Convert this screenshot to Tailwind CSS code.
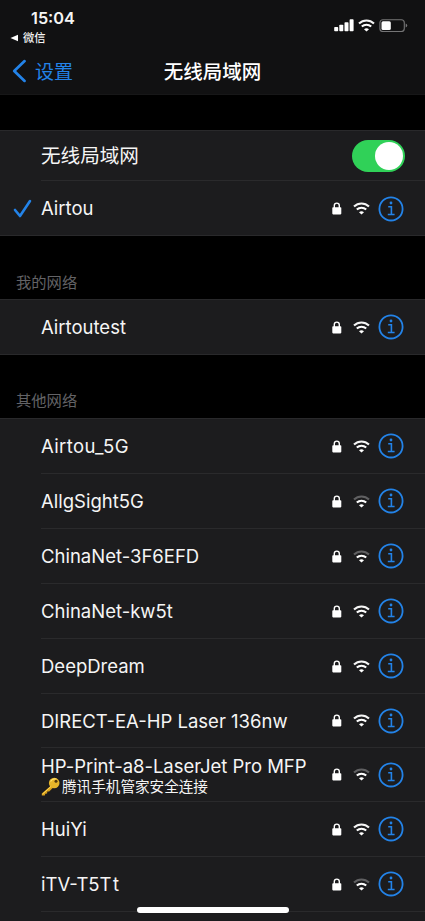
<!DOCTYPE html>
<html lang="zh-CN">
<head>
<meta charset="utf-8">
<meta name="viewport" content="width=device-width, initial-scale=1">
<title>无线局域网</title>
<script src="https://cdn.jsdelivr.net/npm/@tailwindcss/browser@4"></script>
</head>
<body class="bg-black">
<svg class="hidden">
  <symbol id="lock" viewBox="0 0 10 13"><path d="M2.3 6V3.6a2.5 2.5 0 0 1 5 0V6" fill="none" stroke="#fff" stroke-width="1.4"/><rect x=".3" y="5.2" width="9" height="7.2" rx=".8" fill="#fff"/></symbol>
  <symbol id="arc-outer" viewBox="0 0 17 13"><path d="M1 4.5C5.2 .4 11.8 .4 16 4.5" fill="none" stroke="currentColor" stroke-width="2.1"/></symbol>
  <symbol id="arc-inner" viewBox="0 0 17 13"><path d="M3.8 7.6C6.5 5.1 10.5 5.1 13.2 7.6" fill="none" stroke="#fff" stroke-width="2.1"/><path d="M8.5 12.6 6 10.2Q8.5 8.2 11 10.2Z" fill="#fff"/></symbol>
  <symbol id="wifi" viewBox="0 0 17 13"><use href="#arc-outer" width="17" height="13"/><use href="#arc-inner" width="17" height="13"/></symbol>
  <symbol id="info" viewBox="0 0 26 26"><g fill="none" stroke="#2383e8" stroke-width="1.8"><circle cx="13" cy="12.9" r="11.6"/><path d="M10.2 10.7h3.2v7.6M9.8 18.5h6.8" stroke-width="1.6"/></g><circle cx="13" cy="7" r="1.4" fill="#2383e8"/></symbol>
</svg>
<div class="w-[425px] h-[921px] relative overflow-hidden bg-black text-[#f5f5f5] font-['Inter','Noto_Sans_CJK_SC',sans-serif]">
  <header class="h-[95px] bg-[#111112] border-b border-[#171718]">
    <div class="flex justify-between h-[46px]">
      <div class="pl-[10px] pt-[9px]">
        <div class="pl-[21px] text-[16.3px] leading-[19px] font-semibold">15:04</div>
        <div class="flex items-center mt-[2px] gap-[5px] h-[16px] text-[11.3px] leading-[16px] font-medium"><svg class="w-[8px] h-[8px]" viewBox="0 0 8 8"><path d="M.5 4 8 .7v6.6z" fill="#fff"/></svg>微信</div>
      </div>
      <div class="flex items-start pt-[19px] pr-[17px]">
        <svg class="w-[20px] h-[13px]" viewBox="0 0 20 13" fill="#fff"><rect x=".2" y="8" width="4" height="4.3" rx=".8"/><rect x="5.3" y="5.8" width="4" height="6.5" rx=".8"/><rect x="10.5" y="3.3" width="4" height="9" rx=".8"/><rect x="15.6" y=".3" width="4" height="12" rx=".8"/></svg>
        <svg class="w-[17px] h-[13px] ml-[4px]"><use href="#wifi"/></svg>
        <svg class="w-[29px] h-[13px] ml-[4px]" viewBox="0 0 29 13"><rect x=".9" y=".7" width="24.4" height="11.8" rx="3" fill="none" stroke="#757576" stroke-width="1.1"/><rect x="2.5" y="2.2" width="9.3" height="8.8" rx="1.5" fill="#fff"/><path d="M26.7 4.6q1.5.5 1.5 2t-1.5 2z" fill="#757576"/></svg>
      </div>
    </div>
    <div class="grid grid-cols-[1fr_auto_1fr] items-center h-[50px]">
      <div class="flex items-center pl-[12px] gap-[8px] text-[#2383e8] text-[19px] leading-[28px]"><svg class="w-[15px] h-[24px]" viewBox="0 0 15 24"><path d="M12.6 2.1 2.2 12l10.4 9.9" fill="none" stroke="currentColor" stroke-width="2.7" stroke-linecap="round" stroke-linejoin="round"/></svg><span class="pt-[3px]">设置</span></div>
      <h1 class="pt-[2px] text-[19.5px] leading-[28px] font-medium text-white">无线局域网</h1>
      <div></div>
    </div>
  </header>

  <section class="mt-[35px] bg-[#1c1c1e] border-y border-[#29292b] h-[106px] text-[18.5px]">
    <div class="flex items-center justify-between h-[50px] ml-[41px] pr-[20px] border-b border-[#2a2a2c] text-[19.6px]"><span class="pt-[3px]">无线局域网</span>
      <div class="w-[53px] h-[32px] rounded-full bg-[#30d158] flex items-center justify-end pr-[2px]"><div class="w-[28px] h-[28px] rounded-full bg-white"></div></div>
    </div>
    <div class="flex items-center h-[55px] pl-[13px] pr-[21px]"><svg class="w-[19px] h-[20px] mr-[9px]" viewBox="0 0 19 20"><path d="m2 11 5 6L17 2" fill="none" stroke="#2383e8" stroke-width="2.6" stroke-linecap="round" stroke-linejoin="round"/></svg><span class="grow pt-[1px]">Airtou</span><svg class="w-[10px] h-[13px]"><use href="#lock"/></svg><svg class="w-[17px] h-[13px] ml-[11px] mr-[8px]"><use href="#wifi"/></svg><svg class="w-[26px] h-[26px]"><use href="#info"/></svg></div>
  </section>

  <h2 class="h-[63px] pt-[35px] pl-[16px] text-[15.3px] leading-[24px] text-[#636366]">我的网络</h2>
  <section class="h-[56px] bg-[#1c1c1e] border-y border-[#29292b] text-[18.5px]">
    <div class="flex items-center h-[54px] pl-[41px] pr-[21px]"><span class="grow pt-[2px]">Airtoutest</span><svg class="w-[10px] h-[13px]"><use href="#lock"/></svg><svg class="w-[17px] h-[13px] ml-[11px] mr-[8px]"><use href="#wifi"/></svg><svg class="w-[26px] h-[26px]"><use href="#info"/></svg></div>
  </section>

  <h2 class="h-[63px] pt-[34px] pl-[16px] text-[15.3px] leading-[24px] text-[#636366]">其他网络</h2>
  <section class="h-[504px] bg-[#1c1c1e] border-t border-[#29292b] pl-[41px] text-[18.5px]">
    <div class="flex items-center h-[55px] pr-[21px] border-b border-[#2a2a2c]"><span class="grow pt-[2px] tracking-[.37px]">Airtou_5G</span><svg class="w-[10px] h-[13px]"><use href="#lock"/></svg><svg class="w-[17px] h-[13px] ml-[11px] mr-[8px]"><use href="#wifi"/></svg><svg class="w-[26px] h-[26px]"><use href="#info"/></svg></div>
    <div class="flex items-center h-[55px] pr-[21px] border-b border-[#2a2a2c]"><span class="grow pt-[2px]">AllgSight5G</span><svg class="w-[10px] h-[13px]"><use href="#lock"/></svg><svg class="w-[17px] h-[13px] ml-[11px] mr-[8px] text-[#606062]"><use href="#wifi"/></svg><svg class="w-[26px] h-[26px]"><use href="#info"/></svg></div>
    <div class="flex items-center h-[55px] pr-[21px] border-b border-[#2a2a2c]"><span class="grow pt-[2px]">ChinaNet-3F6EFD</span><svg class="w-[10px] h-[13px]"><use href="#lock"/></svg><svg class="w-[17px] h-[13px] ml-[11px] mr-[8px] text-[#606062]"><use href="#wifi"/></svg><svg class="w-[26px] h-[26px]"><use href="#info"/></svg></div>
    <div class="flex items-center h-[55px] pr-[21px] border-b border-[#2a2a2c]"><span class="grow pt-[2px]">ChinaNet-kw5t</span><svg class="w-[10px] h-[13px]"><use href="#lock"/></svg><svg class="w-[17px] h-[13px] ml-[11px] mr-[8px]"><use href="#wifi"/></svg><svg class="w-[26px] h-[26px]"><use href="#info"/></svg></div>
    <div class="flex items-center h-[55px] pr-[21px] border-b border-[#2a2a2c]"><span class="grow pt-[2px]">DeepDream</span><svg class="w-[10px] h-[13px]"><use href="#lock"/></svg><svg class="w-[17px] h-[13px] ml-[11px] mr-[8px]"><use href="#wifi"/></svg><svg class="w-[26px] h-[26px]"><use href="#info"/></svg></div>
    <div class="flex items-center h-[54px] pr-[21px] border-b border-[#2a2a2c]"><span class="grow pt-[2px]">DIRECT-EA-HP Laser 136nw</span><svg class="w-[10px] h-[13px]"><use href="#lock"/></svg><svg class="w-[17px] h-[13px] ml-[11px] mr-[8px]"><use href="#wifi"/></svg><svg class="w-[26px] h-[26px]"><use href="#info"/></svg></div>
    <div class="flex items-center h-[54px] pr-[21px] border-b border-[#2a2a2c]">
      <div class="grow pt-[2px]"><div class="leading-[22px] tracking-[-.03px]">HP-Print-a8-LaserJet Pro MFP</div>
        <div class="flex items-center text-[14.6px] leading-[20px] whitespace-nowrap"><svg class="w-[20px] h-[19px] mr-px shrink-0" viewBox="0 0 20 19"><path d="m10 8.5-9.2 8v2h3l.5-1.8 1.8-.2.2-1.9 1.9-.2 4-4z" fill="#d9a01c"/><circle cx="13.2" cy="6" r="5.3" fill="#e6b52a"/><path d="M9.5 4.5q2-3.5 6-2.5" fill="none" stroke="#ffe26a" stroke-width="1.2"/><path d="m10 9.5-8.5 7.6" stroke="#ffda57" stroke-width="1"/><circle cx="15" cy="4.3" r="1.5" fill="#51370b"/></svg>腾讯手机管家安全连接</div></div>
      <svg class="w-[10px] h-[13px]"><use href="#lock"/></svg><svg class="w-[17px] h-[13px] ml-[11px] mr-[8px] text-[#606062]"><use href="#wifi"/></svg><svg class="w-[26px] h-[26px]"><use href="#info"/></svg></div>
    <div class="flex items-center h-[55px] pr-[21px] border-b border-[#2a2a2c]"><span class="grow pt-[2px]">HuiYi</span><svg class="w-[10px] h-[13px]"><use href="#lock"/></svg><svg class="w-[17px] h-[13px] ml-[11px] mr-[8px]"><use href="#wifi"/></svg><svg class="w-[26px] h-[26px]"><use href="#info"/></svg></div>
    <div class="flex items-center h-[55px] pr-[21px] border-b border-[#2a2a2c]"><span class="grow pt-[2px]">iTV-T5T<span class="pl-[1.5px]">t</span></span><svg class="w-[10px] h-[13px]"><use href="#lock"/></svg><svg class="w-[17px] h-[13px] ml-[11px] mr-[8px] text-[#606062]"><use href="#wifi"/></svg><svg class="w-[26px] h-[26px]"><use href="#info"/></svg></div>
  </section>
  <div class="absolute left-[136.5px] top-[907px] w-[152px] h-[6px] rounded-full bg-white"></div>
</div>
</body>
</html>
